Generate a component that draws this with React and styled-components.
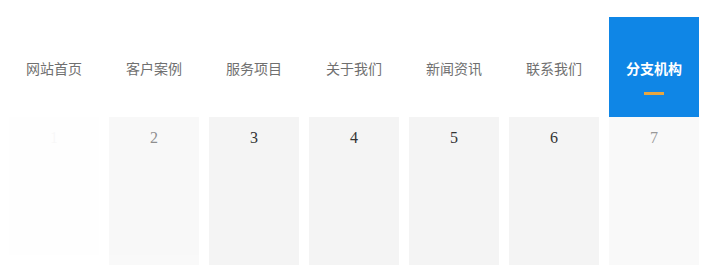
import React from "react";
import styled, { createGlobalStyle } from "styled-components";

const Global = createGlobalStyle`
  html, body { margin: 0; padding: 0; background: #fff; }
  body { font-family: "Noto Sans CJK SC", "Noto Sans", sans-serif; }
`;

const Page = styled.div`
  width: 718px;
  height: 278px;
  padding: 17px 0 0 9px;
  box-sizing: border-box;
  display: flex;
  flex-direction: column;
`;

const Nav = styled.nav`
  display: flex;
  gap: 10px;
`;

const NavItem = styled.div`
  width: 90px;
  height: 100px;
  box-sizing: border-box;
  padding-top: 41px;
  display: flex;
  flex-direction: column;
  align-items: center;
  background: ${(p) => (p.$active ? "#0f86e6" : "transparent")};
  color: ${(p) => (p.$active ? "#fff" : "#707070")};
  font-size: 14px;
  line-height: 20px;
  font-weight: ${(p) => (p.$active ? 700 : 400)};
`;

const Bar = styled.span`
  display: block;
  width: 20px;
  height: 3px;
  margin-top: 14px;
  background: #e6a640;
`;

const Cards = styled.div`
  display: flex;
  gap: 10px;
`;

const Card = styled.div`
  width: 90px;
  height: 148px;
  box-sizing: border-box;
  padding-top: 11px;
  background: #f4f4f4;
  color: #333;
  font-family: "Liberation Serif", serif;
  font-size: 16px;
  line-height: 20px;
  text-align: center;
  opacity: ${(p) => p.$fade};
`;

const items = ["网站首页", "客户案例", "服务项目", "关于我们", "新闻资讯", "联系我们", "分支机构"];
const fades = [0.03, 0.55, 1, 1, 1, 1, 0.5];

export default function App() {
  return (
    <>
      <Global />
      <Page>
        <Nav>
          {items.map((t, i) => (
            <NavItem key={t} $active={i === 6}>
              {t}
              {i === 6 && <Bar />}
            </NavItem>
          ))}
        </Nav>
        <Cards>
          {fades.map((f, i) => (
            <Card key={i} $fade={f}>
              {i + 1}
            </Card>
          ))}
        </Cards>
      </Page>
    </>
  );
}
